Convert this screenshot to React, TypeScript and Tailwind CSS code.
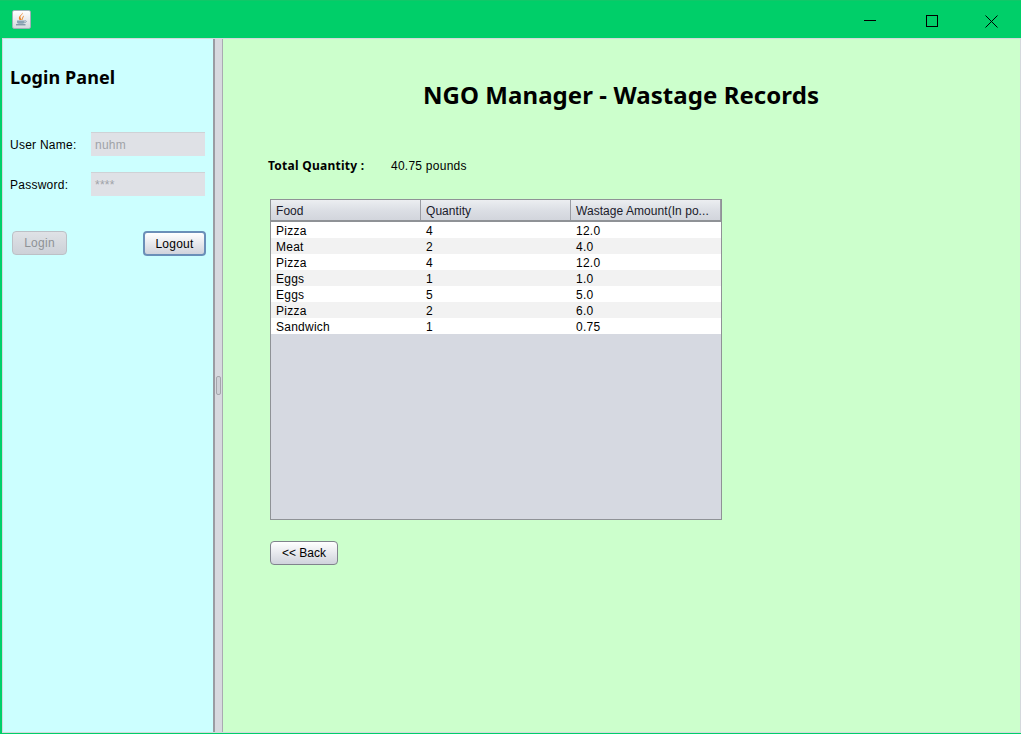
const rows = [
  ["Pizza", "4", "12.0"],
  ["Meat", "2", "4.0"],
  ["Pizza", "4", "12.0"],
  ["Eggs", "1", "1.0"],
  ["Eggs", "5", "5.0"],
  ["Pizza", "2", "6.0"],
  ["Sandwich", "1", "0.75"],
];

const headers = ["Food", "Quantity", "Wastage Amount(In po..."];

const JavaIcon = () => (
  <div className="flex h-[19px] w-[19px] items-center justify-center rounded-[2px] border border-[#9fb0b8] bg-gradient-to-b from-white to-[#d5d9de]">
    <svg width="15" height="15" viewBox="0 0 15 15" fill="none">
      <path d="M8.500 0.500c1 2-2.600 3-2 5 .3 1 1.200 1.500 1.300 2.500H5.500C4.300 6.500 4.800 4.500 6.500 3.200 7.400 2.500 8.200 1.600 8.500 0.500z" fill="#e8842c" />
      <path d="M10 3.500c.4 1.200-1.400 2-1 4.300H8.200C7.400 6 8.600 4.500 10 3.500z" fill="#eb9c4c" />
      <path d="M3 8.500h7.500v1.800c0 .9-.8 1.400-1.600 1.400H4.600c-.8 0-1.600-.5-1.600-1.400z" fill="#8aa3b4" />
      <path d="M10.500 8.800h1.200c1 0 1 1.800-1.400 2" stroke="#7d98ab" strokeWidth="0.8" />
      <path d="M2 12.800h9.500" stroke="#5f7d92" strokeWidth="1" />
    </svg>
  </div>
);

export default function App() {
  return (
    <div className="flex h-[734px] w-[1021px] flex-col overflow-hidden bg-[#00cf69] font-['Liberation_Sans',Arial,sans-serif] text-[12px] tracking-[0.25px] text-black">
      {/* title bar */}
      <div className="flex h-[38px] shrink-0 items-center border-t border-[#10c868] pl-[12px]">
        <JavaIcon />
        <div className="ml-auto flex h-full items-center">
          <svg width="58" height="36" viewBox="0 0 58 36" fill="none">
            <path d="M18 18.500h12" stroke="#000" strokeWidth="1" />
          </svg>
          <svg width="58" height="36" viewBox="0 0 58 36" fill="none">
            <rect x="22.500" y="13.500" width="11" height="11" stroke="#000" strokeWidth="1" />
          </svg>
          <svg width="59" height="36" viewBox="0 0 59 36" fill="none">
            <path d="M23.500 13.500l12 12M35.500 13.500l-12 12" stroke="#000" strokeWidth="1" />
          </svg>
        </div>
      </div>

      {/* body */}
      <div className="flex min-h-0 flex-1 pb-[1px] pl-[2px]">
        <div className="flex min-h-0 flex-1 border-t border-r border-b border-l border-[#d4d8dc]">
          {/* login panel */}
          <div className="flex w-[210px] shrink-0 flex-col bg-[#ccffff] px-[7px] pt-[26px]">
            <h2 className="font-['Noto_Sans',sans-serif] text-[18px] leading-[24px] font-bold tracking-[0.1px]">Login Panel</h2>
            <div className="mt-[43px] flex h-[24px] items-center justify-between pr-[1px]">
              <span className="pt-[1px]">User Name:</span>
              <div className="flex h-[24px] w-[114px] items-center border-t border-[#cfd2d6] bg-[#dfe1e6] px-[4px] text-[#a0a3a8]">nuhm</div>
            </div>
            <div className="mt-[16px] flex h-[24px] items-center justify-between pr-[1px]">
              <span className="pt-[1px]">Password:</span>
              <div className="flex h-[24px] w-[114px] items-center border-t border-[#cfd2d6] bg-[#dfe1e6] px-[4px] text-[#a0a3a8]">****</div>
            </div>
            <div className="mt-[35px] flex items-start justify-between pl-[2px]">
              <button className="h-[24px] w-[55px] rounded-[4px] border border-[#bcc0c6] bg-gradient-to-b from-[#dfe2e6] to-[#cdd1d8] text-[#8e9296]">Login</button>
              <button className="h-[25px] w-[63px] rounded-[4px] border-2 border-[#6a8fb8] bg-gradient-to-b from-white to-[#d0d3dc]">Logout</button>
            </div>
          </div>

          {/* splitter */}
          <div className="flex w-[10px] shrink-0 items-center justify-center border-r border-l-2 border-r-[#a9abb1] border-l-[#9a9ca3] bg-[#d7d9df]">
            <div className="h-[19px] w-[5px] rounded-[2px] border border-[#a4a6ac] bg-[#cfd1d7]"></div>
          </div>

          {/* main panel */}
          <div className="min-w-0 flex-1 bg-[#ccffcc] pt-[39px] pl-[45px]">
            <h1 className="w-[706px] text-center font-['Noto_Sans',sans-serif] text-[24px] leading-[34px] font-bold tracking-[0.07px]">NGO Manager - Wastage Records</h1>
            <div className="mt-[46px] flex h-[16px] items-center">
              <span className="w-[123px] font-['Noto_Sans',sans-serif] text-[12px] font-bold">Total Quantity :</span>
              <span>40.75 pounds</span>
            </div>
            <div className="mt-[25px] ml-[2px] flex h-[321px] w-[452px] flex-col border border-[#8f9296] bg-[#d6d9e1]">
              <div className="grid h-[22px] shrink-0 grid-cols-[150px_150px_150px] border-b-2 border-[#8f9296] bg-gradient-to-b from-[#eceef1] via-[#dcdfe5] to-[#d2d5dc] tracking-[0.05px]">
                {headers.map((h) => (
                  <div key={h} className="flex items-center border-r border-[#9a9ca3] px-[5px] pt-[1px] whitespace-nowrap text-[#1a1a2a]">{h}</div>
                ))}
              </div>
              <div className="flex flex-col">
                {rows.map((r, i) => (
                  <div key={i} className={`grid h-[16px] grid-cols-[150px_150px_150px] items-center ${i % 2 ? "bg-[#f2f2f2]" : "bg-white"}`}>
                    {r.map((c, j) => (
                      <div key={j} className="px-[5px]">{c}</div>
                    ))}
                  </div>
                ))}
              </div>
            </div>
            <button className="mt-[21px] ml-[2px] h-[24px] w-[68px] rounded-[4px] border border-[#80838c] bg-gradient-to-b from-white to-[#d0d3dc] tracking-normal">&lt;&lt; Back</button>
          </div>
        </div>
      </div>
    </div>
  );
}
